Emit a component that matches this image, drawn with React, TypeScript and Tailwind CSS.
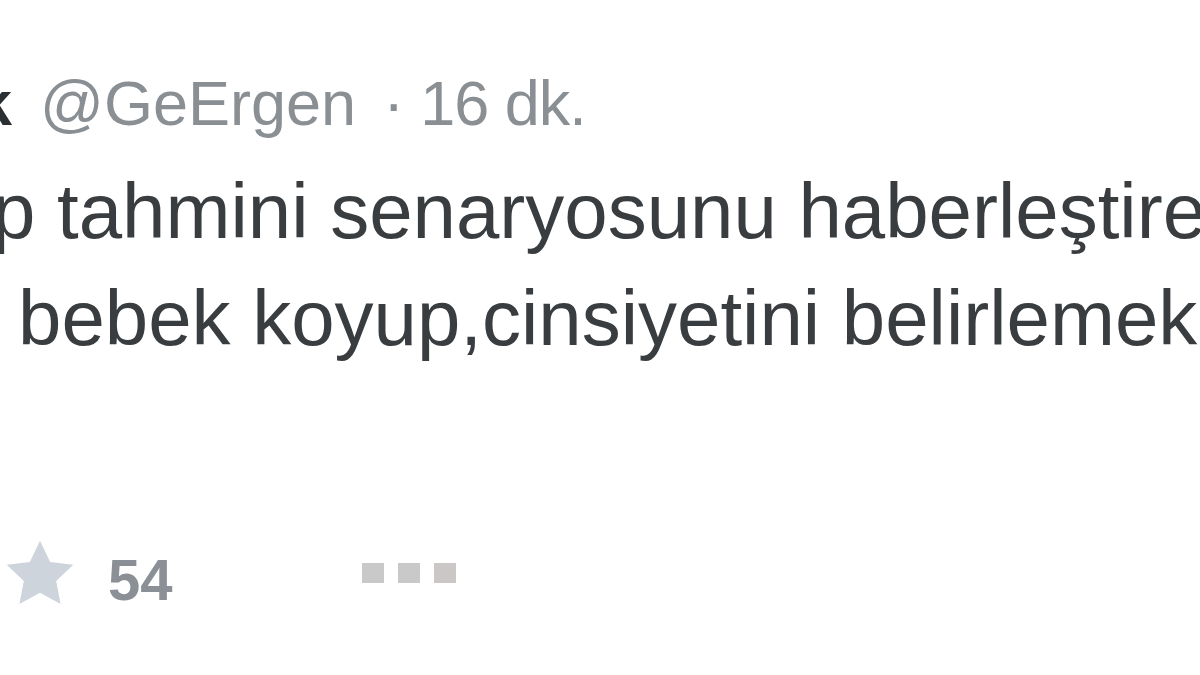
import React from "react";

export default function App() {
  return (
    <div
      className="w-[1200px] h-[675px] overflow-hidden bg-white relative"
      style={{ fontFamily: '"Liberation Sans", Arial, sans-serif' }}
    >
      <div className="pt-[72px] flex items-baseline whitespace-nowrap text-[63px] leading-none">
        <span className="font-bold text-[#292f33] -ml-[23px]">k</span>
        <span className="ml-[28px] text-[#8a8f94]">@GeErgen</span>
        <span className="ml-[27px] text-[#8a8f94]">·</span>
        <span className="ml-[16px] text-[#8a8f94] tracking-[-1px]">16 dk.</span>
      </div>
      <div className="mt-[23px] text-[78px] leading-[107px] text-[#3a3d40] whitespace-nowrap">
        <div className="-ml-[8px]">p tahmini senaryosunu haberleştireceğiz</div>
        <div className="ml-[18px]">bebek koyup,cinsiyetini belirlemek için</div>
      </div>
      <div className="mt-[164px] flex items-start whitespace-nowrap">
        <svg width="78" height="76" viewBox="0 0 24 24" className="ml-[1px]">
          <path
            d="M12 1.5l3.2 6.7 7.3.9-5.4 5.1 1.4 7.3L12 17.9l-6.5 3.6 1.4-7.3L1.5 9.1l7.3-.9z"
            fill="#cdd4db"
          />
        </svg>
        <span className="mt-[15px] ml-[29px] text-[58px] font-bold text-[#8a9096] leading-none">54</span>
        <div className="mt-[27px] ml-[189px] flex gap-[14px]">
          <div className="w-[22px] h-[20px] bg-[#c9c9c9]" />
          <div className="w-[22px] h-[20px] bg-[#c9c9c9]" />
          <div className="w-[22px] h-[20px] bg-[#cbc7c7]" />
        </div>
      </div>
    </div>
  );
}
